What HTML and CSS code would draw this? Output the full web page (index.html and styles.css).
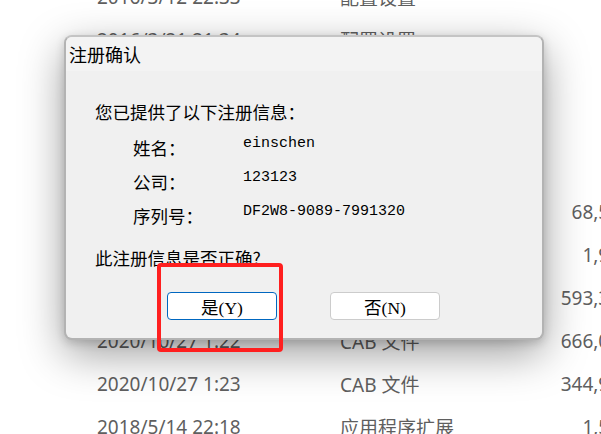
FILE: index.html
```html
<!DOCTYPE html>
<html lang="zh-CN">
<head>
    <meta charset="UTF-8">
    <title>注册确认</title>
    <link rel="stylesheet" href="styles.css">
</head>
<body>

<div id="files">
    <div class="row"><span class="date">2016/3/12 22:33</span><span class="type">配置设置</span><span class="size">1 KB</span></div>
    <div class="row"><span class="date">2016/3/21 21:34</span><span class="type">配置设置</span><span class="size">1 KB</span></div>
    <div class="row"><span class="date">2020/10/27 1:20</span><span class="type">CAB 文件</span><span class="size">5 KB</span></div>
    <div class="row"><span class="date">2020/10/27 1:20</span><span class="type">CAB 文件</span><span class="size">8 KB</span></div>
    <div class="row"><span class="date">2020/10/27 1:21</span><span class="type">CAB 文件</span><span class="size">2 KB</span></div>
    <div class="row"><span class="date">2020/10/27 1:21</span><span class="type">CAB 文件</span><span class="size">68,512 KB</span></div>
    <div class="row"><span class="date">2020/10/27 1:21</span><span class="type">CAB 文件</span><span class="size">1,936 KB</span></div>
    <div class="row"><span class="date">2020/10/27 1:22</span><span class="type">CAB 文件</span><span class="size">593,304 KB</span></div>
    <div class="row"><span class="date">2020/10/27 1:22</span><span class="type">CAB 文件</span><span class="size">666,016 KB</span></div>
    <div class="row"><span class="date">2020/10/27 1:23</span><span class="type">CAB 文件</span><span class="size">344,928 KB</span></div>
    <div class="row"><span class="date">2018/5/14 22:18</span><span class="type">应用程序扩展</span><span class="size">1,544 KB</span></div>
</div>

<div id="dialog">
    <div class="title">注册确认</div>
    <div class="body">
        <div class="intro">您已提供了以下注册信息：</div>
        <div class="info">
            <div class="field"><span class="label">姓名：</span><span class="value">einschen</span></div>
            <div class="field"><span class="label">公司：</span><span class="value">123123</span></div>
            <div class="field"><span class="label">序列号：</span><span class="value">DF2W8-9089-7991320</span></div>
        </div>
        <div class="question">此注册信息是否正确?</div>
        <div class="buttons">
            <button class="btn primary">是(Y)</button>
            <button class="btn">否(N)</button>
        </div>
    </div>
</div>

<div id="mark"></div>

</body>
</html>
```

FILE: styles.css
```css
/* 背景里的文件列表 + 上面盖着的确认对话框 */
html, body{
    margin: 0;
    height: 100%;
    overflow: hidden;
    background-color: white;
}

#files{
    margin-top: -25px;
    overflow: hidden;
    font-family: "Noto Sans", "Noto Sans CJK SC", sans-serif;
    font-size: 19px;
    color: #5f5f5f;
}
.row{
    display: flex;
    align-items: center;
    height: 43px;
    white-space: nowrap;
}
.date{
    flex: none;
    width: 243px;
    padding-left: 97px;
}
.type{
    flex: none;
    width: 200px;
}
.size{
    flex: none;
    width: 120px;
    text-align: right;
}

#dialog{
    position: absolute;
    left: 64px;
    top: 35px;
    width: 480px;
    height: 305px;
    box-sizing: border-box;
    border: 2px solid #b3b3b3;
    border-top-color: #c4c4c4;
    border-radius: 8px;
    background-color: #f0f0f0;
    box-shadow: 0 14px 44px rgba(0, 0, 0, 0.38), 0 3px 10px rgba(0, 0, 0, 0.16);
    font-family: "Noto Sans CJK SC", sans-serif;
    color: black;
    overflow: hidden;
}
.title{
    height: 34px;
    line-height: 34px;
    padding-left: 3px;
    font-size: 18px;
    background-color: #f3f3f3;
}
.body{
    padding: 24px 0 0 29px;
    font-size: 17.5px;
}
.intro, .question{
    height: 34px;
    line-height: 34px;
}
.info{
    margin-top: 2px;
    padding-left: 38px;
}
.field{
    display: flex;
    align-items: center;
    height: 34px;
    line-height: 34px;
}
.label{
    width: 110px;
}
.value{
    margin-bottom: 8px;
    line-height: 20px;
    font-family: "Liberation Mono", monospace;
    font-size: 15px;
}
.question{
    margin-top: 8px;
}
.buttons{
    display: flex;
    gap: 53px;
    margin-top: 17px;
    padding-left: 72px;
}
.btn{
    width: 110px;
    height: 28px;
    padding: 0;
    border: 1px solid #cccccc;
    border-radius: 4px;
    background-color: white;
    font-family: "Liberation Serif", "Noto Sans CJK SC", serif;
    font-size: 17.5px;
    color: black;
}
.btn.primary{
    border-color: #0067c0;
}

/* 红色标注框 */
#mark{
    position: absolute;
    left: 157px;
    top: 263px;
    width: 126px;
    height: 89px;
    box-sizing: border-box;
    border: 4px solid #ff1f1f;
    border-radius: 4px;
}
```
